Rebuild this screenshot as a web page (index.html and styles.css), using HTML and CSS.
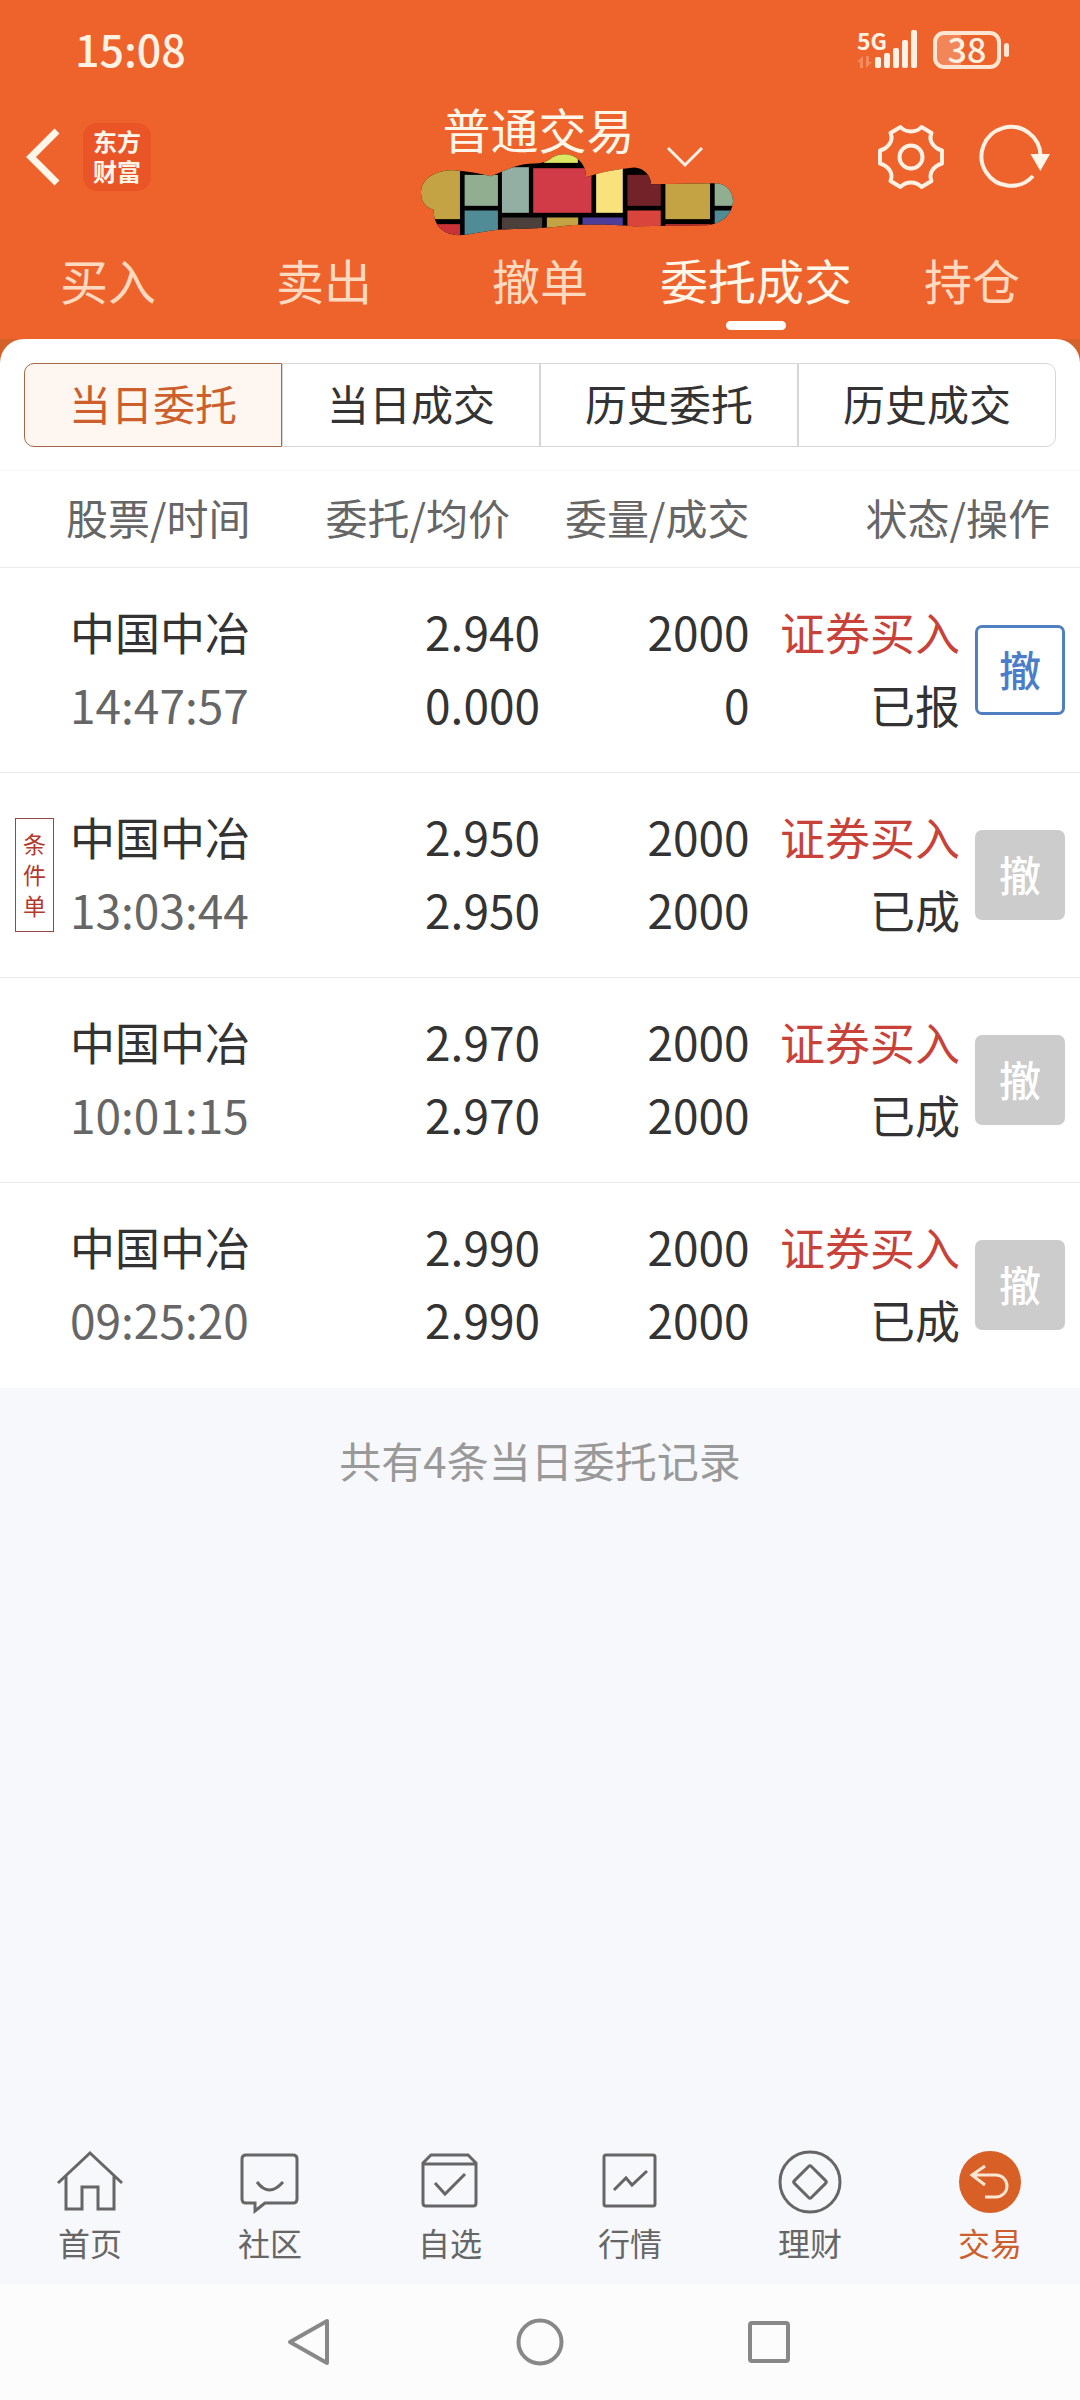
FILE: index.html
```html
<!DOCTYPE html>
<html lang="zh-CN">
<head>
  <meta charset="UTF-8" />
  <meta name="viewport" content="width=device-width, initial-scale=1.0" />
  <title>委托成交</title>
  <link rel="stylesheet" href="styles.css">
</head>
<body>
  <header class="header">
    <div class="status-bar">
      <span class="clock">15:08</span>
      <div class="status-icons">
        <div class="signal">
          <span class="signal-type">5G</span>
          <svg width="64" height="40" viewBox="0 0 64 40">
            <path d="M0 32l6-6v12h-3v-6zM15 32l-6 6V26h3v6z" fill="#f58a5c"/>
            <g fill="#fff1e4">
              <rect x="18" y="27" width="6" height="11" rx="2"/>
              <rect x="27" y="23" width="6" height="15" rx="2"/>
              <rect x="36" y="18" width="6" height="20" rx="2"/>
              <rect x="45" y="10" width="6" height="28" rx="2"/>
              <rect x="54" y="0" width="6" height="38" rx="2"/>
            </g>
          </svg>
        </div>
        <div class="battery"><span>38</span></div>
      </div>
    </div>

    <div class="top-bar">
      <div class="top-left">
        <button class="icon-btn" aria-label="返回">
          <svg width="34" height="58" viewBox="0 0 34 58" fill="none" stroke="#fff6ea" stroke-width="7">
            <path d="M31 3L5 29l26 26"/>
          </svg>
        </button>
        <div class="logo">东方<br>财富</div>
      </div>
      <div class="top-title">
        <button class="account-btn">普通交易</button>
        <svg class="chevron" width="38" height="22" viewBox="0 0 38 22" fill="none" stroke="#fff1e4" stroke-width="3">
          <path d="M2 2l17 17L36 2"/>
        </svg>
        <!-- account name cover -->
        <svg class="cover" width="313" height="83" viewBox="60 188 940 248">
          <clipPath id="coverShape">
            <path d="M60 305C62 262 105 238 160 239C200 243 235 248 270 257C310 240 350 222 385 220C430 218 440 213 455 200C480 187 510 187 530 205C550 222 555 240 556 260C600 245 650 236 700 231C730 232 750 255 751 281L945 278C980 280 997 305 997 332C995 370 965 400 920 404L700 407C640 402 560 400 500 405C430 415 340 415 300 417C260 420 215 430 190 434C150 437 98 425 98 358C75 350 60 335 60 305Z"/>
          </clipPath>
          <g clip-path="url(#coverShape)">
            <rect x="50" y="180" width="960" height="260" fill="#000"/>
            <rect x="50" y="230" width="127" height="156" fill="#c3a344"/>
            <rect x="50" y="401" width="127" height="40" fill="#c93236"/>
            <rect x="191" y="253" width="100" height="93" fill="#92ae91"/>
            <rect x="191" y="360" width="100" height="80" fill="#4f8c95"/>
            <rect x="303" y="230" width="81" height="137" fill="#93afa3"/>
            <rect x="303" y="381" width="121" height="50" fill="#4b403b"/>
            <rect x="430" y="185" width="101" height="32" fill="#dce763"/>
            <rect x="397" y="233" width="175" height="134" fill="#d13b47"/>
            <rect x="438" y="381" width="94" height="50" fill="#c3a344"/>
            <rect x="545" y="381" width="121" height="50" fill="#4f3d9a"/>
            <rect x="586" y="230" width="80" height="137" fill="#f9e27c"/>
            <rect x="680" y="253" width="100" height="93" fill="#74222a"/>
            <rect x="680" y="360" width="100" height="80" fill="#d9443d"/>
            <rect x="794" y="270" width="134" height="116" fill="#c3a344"/>
            <rect x="794" y="401" width="134" height="30" fill="#c93236"/>
            <rect x="942" y="270" width="60" height="76" fill="#92ae91"/>
            <rect x="942" y="360" width="60" height="60" fill="#4f8c95"/>
          </g>
        </svg>
      </div>
      <div class="top-right">
        <button class="icon-btn" aria-label="设置">
          <svg width="68" height="68" viewBox="-34 -34 68 68" fill="none" stroke="#fff1e4" stroke-width="4" stroke-linejoin="round">
            <path d="M-10.5-30C-5-24 5-24 10.5-30L20.500-24C17-16 23-9 31-6.5V6.5C23 9 17 16 20.500 24L10.5 30C5 24-5 24-10.5 30L-20.500 24C-17 16-23 9-31 6.5V-6.5C-23-9-17-16-20.500-24Z"/>
            <circle r="11.5"/>
          </svg>
        </button>
        <button class="icon-btn" aria-label="刷新">
          <svg width="72" height="68" viewBox="0 0 72 68" fill="none" stroke="#fff1e4" stroke-width="4">
            <path d="M61.500 33A29.500 29.500 0 1 0 54 53"/>
            <path d="M51.500 31h19.500l-9.700 17z" fill="#fff6ea" stroke="none"/>
          </svg>
        </button>
      </div>
    </div>

    <nav class="tabs">
      <a href="#" class="tab">买入</a>
      <a href="#" class="tab">卖出</a>
      <a href="#" class="tab">撤单</a>
      <a href="#" class="tab active">委托成交</a>
      <a href="#" class="tab">持仓</a>
    </nav>
  </header>

  <main class="content">
    <div class="card-wrap">
      <section class="card">
        <div class="segments">
          <button class="segment active">当日委托</button>
          <button class="segment">当日成交</button>
          <button class="segment">历史委托</button>
          <button class="segment">历史成交</button>
        </div>

        <table class="orders">
          <colgroup>
            <col class="col-stock">
            <col class="col-price">
            <col class="col-count">
            <col class="col-state">
            <col class="col-action">
          </colgroup>
          <thead>
            <tr>
              <th class="stock">股票/时间</th>
              <th class="price">委托/均价</th>
              <th>委量/成交</th>
              <th class="state" colspan="2">状态/操作</th>
            </tr>
          </thead>
          <tbody>
            <tr>
              <td class="stock"><div class="name">中国中冶</div><div class="num time">14:47:57</div></td>
              <td class="num">2.940<br>0.000</td>
              <td class="num">2000<br>0</td>
              <td><div class="buy">证券买入</div><div>已报</div></td>
              <td class="action"><button class="cancel">撤</button></td>
            </tr>
            <tr>
              <td class="stock"><span class="badge">条件单</span><div class="name">中国中冶</div><div class="num time">13:03:44</div></td>
              <td class="num">2.950<br>2.950</td>
              <td class="num">2000<br>2000</td>
              <td><div class="buy">证券买入</div><div>已成</div></td>
              <td class="action"><button class="cancel" disabled>撤</button></td>
            </tr>
            <tr>
              <td class="stock"><div class="name">中国中冶</div><div class="num time">10:01:15</div></td>
              <td class="num">2.970<br>2.970</td>
              <td class="num">2000<br>2000</td>
              <td><div class="buy">证券买入</div><div>已成</div></td>
              <td class="action"><button class="cancel" disabled>撤</button></td>
            </tr>
            <tr>
              <td class="stock"><div class="name">中国中冶</div><div class="num time">09:25:20</div></td>
              <td class="num">2.990<br>2.990</td>
              <td class="num">2000<br>2000</td>
              <td><div class="buy">证券买入</div><div>已成</div></td>
              <td class="action"><button class="cancel" disabled>撤</button></td>
            </tr>
          </tbody>
        </table>
      </section>
    </div>
    <p class="summary">共有4条当日委托记录</p>
  </main>

  <nav class="bottom-nav">
    <a href="#" class="nav-item">
      <svg width="70" height="64" viewBox="0 0 70 64">
        <path d="M3 33L35 3l32 30M11 26v33h16V37h16v22h16V26"/>
      </svg>
      首页
    </a>
    <a href="#" class="nav-item">
      <svg width="70" height="64" viewBox="0 0 70 64">
        <path d="M11 5h47q4 0 4 4v40q0 4-4 4H30l-10 8v-8h-9q-4 0-4-4V9q0-4 4-4z"/>
        <path d="M22 32q12 16 26 0"/>
      </svg>
      社区
    </a>
    <a href="#" class="nav-item">
      <svg width="70" height="64" viewBox="0 0 70 64">
        <path d="M8 13l8-8h37l8 8v40q0 3-3 3H11q-3 0-3-3zM8 14h53M20 33l10 11 20-20"/>
      </svg>
      自选
    </a>
    <a href="#" class="nav-item">
      <svg width="70" height="64" viewBox="0 0 70 64">
        <rect x="9" y="5" width="51" height="51" rx="2"/>
        <path d="M19 40l12-12 6 7 15-14"/>
      </svg>
      行情
    </a>
    <a href="#" class="nav-item">
      <svg width="70" height="64" viewBox="0 0 70 64">
        <circle cx="35" cy="32" r="30"/>
        <rect x="23" y="20" width="24" height="24" rx="2" transform="rotate(45 35 32)"/>
      </svg>
      理财
    </a>
    <a href="#" class="nav-item active">
      <svg width="70" height="64" viewBox="0 0 70 64">
        <circle cx="35" cy="32" r="31" fill="#d85f26" stroke="none"/>
        <path d="M30 16L17 25l13 10M17 25h24a11 11 0 0 1 0 22H30" stroke="#ffe6d2"/>
      </svg>
      交易
    </a>
  </nav>

  <div class="system-nav">
    <button class="icon-btn" aria-label="返回">
      <svg width="48" height="48" viewBox="0 0 48 48"><path d="M40 3v42L3 24z"/></svg>
    </button>
    <button class="icon-btn" aria-label="主屏幕">
      <svg width="48" height="48" viewBox="0 0 48 48"><circle cx="24" cy="24" r="21.500"/></svg>
    </button>
    <button class="icon-btn" aria-label="最近任务">
      <svg width="48" height="48" viewBox="0 0 48 48"><rect x="5" y="5" width="38" height="38" rx="2"/></svg>
    </button>
  </div>
</body>
</html>
```
FILE: styles.css
```css
* { box-sizing: border-box; }
body {
  margin: 0;
  min-height: 100vh;
  display: flex;
  flex-direction: column;
  background: #f7f8fb;
  color: #333;
  font-family: "Noto Sans CJK SC", sans-serif;
}
a { text-decoration: none; }
button {
  margin: 0;
  padding: 0;
  border: none;
  background: none;
  font-family: inherit;
  cursor: pointer;
}
svg { display: block; }

/* header */
.header {
  background: #ed632b;
  color: #fff1e4;
}
.status-bar {
  display: flex;
  justify-content: space-between;
  align-items: center;
  height: 96px;
  padding: 4px 79px 0 75px;
}
.clock {
  padding-bottom: 4px;
  font-size: 43px;
  font-weight: 500;
}
.status-icons {
  display: flex;
  align-items: center;
  gap: 12px;
}
.signal { position: relative; }
.signal-type {
  position: absolute;
  top: 0;
  left: 0;
  font-size: 23px;
  font-weight: 700;
  line-height: 20px;
}
.battery {
  position: relative;
  width: 68px;
  height: 38px;
  border: 4px solid #ffe6d2;
  border-radius: 11px;
  background: linear-gradient(90deg, #f28658 40%, transparent 40%);
  font-size: 34px;
  font-weight: 500;
  line-height: 28px;
  text-align: center;
}
.battery::after {
  content: "";
  position: absolute;
  right: -12px;
  top: 8px;
  width: 5px;
  height: 14px;
  border-radius: 3px;
  background: #ffe6d2;
}
.top-bar {
  display: grid;
  grid-template-columns: 1fr 384px 1fr;
  align-items: center;
  height: 122px;
  padding: 0 29px 0 26px;
}
.top-left {
  display: flex;
  align-items: center;
  gap: 23px;
}
.logo {
  width: 68px;
  height: 68px;
  padding-top: 3px;
  border-radius: 14px;
  background: #ea5528;
  color: #fff6ea;
  font-size: 24px;
  font-weight: 700;
  line-height: 30px;
  text-align: center;
}
.top-title {
  position: relative;
  height: 100%;
  text-align: center;
}
.account-btn {
  color: #fff6ea;
  font-size: 48px;
  line-height: 64px;
}
.chevron {
  position: absolute;
  top: 50px;
  right: 27px;
}
.cover {
  position: absolute;
  top: 57px;
  right: -3px;
}
.top-right {
  display: flex;
  justify-content: flex-end;
  gap: 34px;
}
.tabs {
  display: flex;
  padding: 29px 0 9px;
}
.tab {
  flex: 1;
  display: flex;
  flex-direction: column;
  align-items: center;
  gap: 10px;
  color: #ffd9c0;
  font-size: 48px;
  line-height: 64px;
}
.tab::after {
  content: "";
  width: 60px;
  height: 9px;
  border-radius: 5px;
}
.tab.active { color: #fff6ea; }
.tab.active::after { background: #fff; }

/* orders */
.content { flex: 1; }
.card-wrap {
  background: linear-gradient(#d4602a 40px, #fff 40px);
}
.card {
  padding-top: 24px;
  border-radius: 24px 24px 0 0;
  background: #fff;
}
.segments {
  display: flex;
  margin: 0 24px 23px;
}
.segment {
  flex: 1;
  height: 84px;
  padding-bottom: 6px;
  border: 1px solid #d6d6d6;
  color: #333;
  font-size: 42px;
}
.segment:first-child { border-radius: 10px 0 0 10px; }
.segment:last-child { border-radius: 0 10px 10px 0; }
.segment.active {
  border-color: #a5694a;
  background: #fdf6f1;
  color: #cc5f2c;
}
.orders {
  width: 100%;
  border-collapse: collapse;
  table-layout: fixed;
  font-size: 45px;
  line-height: 73px;
  text-align: right;
}
.col-stock, .col-price { width: 25%; }
.col-count { width: 19.4%; }
.col-state { width: 19.5%; }
.orders th {
  height: 97px;
  padding: 0 0 6px;
  border-top: 1px solid #f6f6f6;
  color: #666;
  font-size: 42px;
  font-weight: 400;
}
.orders th.stock {
  padding-left: 66px;
  text-align: left;
}
.orders th.price { padding-right: 30px; }
.orders th.state { padding-right: 30px; }
.orders td {
  height: 205px;
  padding: 0 0 4px;
  border-top: 1px solid #ebebeb;
}
.orders td.stock {
  position: relative;
  padding-left: 70px;
  text-align: left;
}
.orders .num { font-size: 46px; }
.time { color: #666; }
.buy { color: #c8423a; }
.orders td.action { padding: 0 15px 0 0; }
.cancel {
  display: block;
  width: 90px;
  height: 90px;
  margin-left: auto;
  padding-bottom: 4px;
  border: 3px solid #4f7fc0;
  border-radius: 7px;
  color: #4b7dc8;
  font-size: 42px;
  font-weight: 500;
}
.cancel:disabled {
  border-color: #ccc;
  background: #ccc;
  color: #fff;
}
.badge {
  position: absolute;
  top: 45px;
  left: 15px;
  width: 39px;
  padding: 9px 7px 10px;
  border: 1px solid #93493f;
  color: #b5382c;
  font-size: 23px;
  line-height: 31px;
}
.summary {
  margin: 40px 0;
  color: #999;
  font-size: 42px;
  line-height: 64px;
  text-align: center;
}

/* bottom */
.bottom-nav {
  display: flex;
  padding-bottom: 20px;
}
.nav-item {
  flex: 1;
  display: flex;
  flex-direction: column;
  align-items: center;
  gap: 6px;
  color: #666;
  font-size: 32px;
  line-height: 44px;
}
.nav-item.active { color: #cc5f2c; }
.nav-item svg {
  fill: none;
  stroke: #666;
  stroke-width: 3;
}
.system-nav {
  display: flex;
  justify-content: center;
  align-items: center;
  gap: 181px;
  height: 116px;
  background: #fcfcfc;
}
.system-nav svg {
  fill: none;
  stroke: #888;
  stroke-width: 4;
  stroke-linejoin: round;
}
```
